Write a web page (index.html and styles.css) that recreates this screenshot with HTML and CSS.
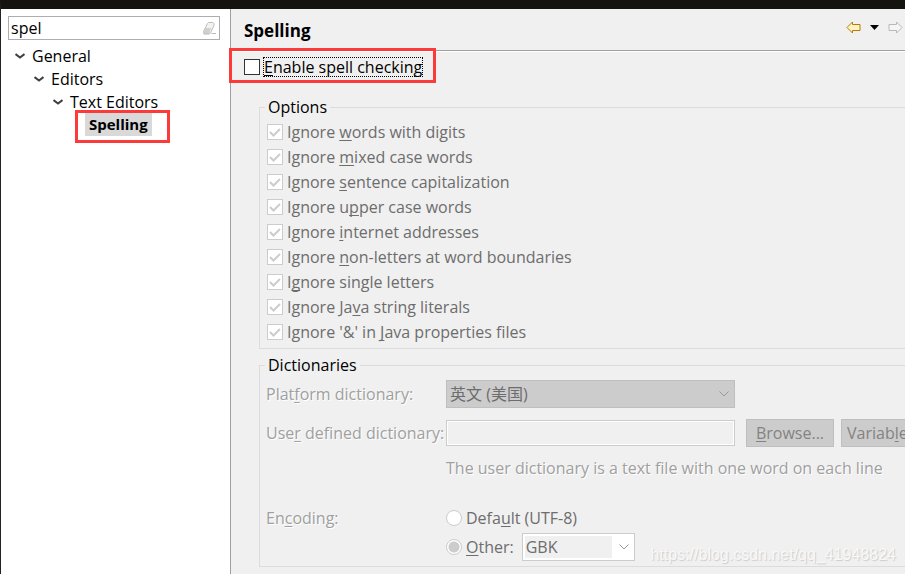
FILE: index.html
```
<!DOCTYPE html>
<html lang="en">
<head>
    <meta charset="UTF-8">
    <meta name="viewport" content="width=device-width, initial-scale=1.0">
    <title>Preferences</title>
    <link rel="stylesheet" href="styles.css">
</head>
<body>
    <div class="window">
        <aside class="sidebar">
            <div class="filter">
                <input class="filter-input" type="text" value="spel" aria-label="Filter text">
                <button class="icon-button" type="button" aria-label="Clear">
                    <svg width="14" height="13" viewBox="0 0 14 13">
                        <path d="M5.500.5H10l1 1v2L7.500 11l-1 1.500h-5l-1-1V9.500L4.500 1.500z" fill="#f2f2f0"/>
                        <path d="M2.500 6H8l-2 6H1V9.500z" fill="#d0d0ce"/>
                        <path d="M5.500.5H10l1 1v2L7.500 11l-1.500 1H1L.5 9.500 4.500 1.500zM8.500 11.500H13" fill="none" stroke="#bdbdbd"/>
                    </svg>
                </button>
            </div>
            <ul class="tree">
                <li>
                    <div class="node"><svg class="twisty" width="10" height="6" viewBox="0 0 10 6"><path d="M.5 1l4.500 3.500L9.500 1"/></svg>General</div>
                    <ul>
                        <li>
                            <div class="node"><svg class="twisty" width="10" height="6" viewBox="0 0 10 6"><path d="M.5 1l4.500 3.500L9.500 1"/></svg>Editors</div>
                            <ul>
                                <li>
                                    <div class="node"><svg class="twisty" width="10" height="6" viewBox="0 0 10 6"><path d="M.5 1l4.500 3.500L9.500 1"/></svg>Text Editors</div>
                                    <ul>
                                        <li><div class="node leaf"><span class="selected">Spelling</span></div></li>
                                    </ul>
                                </li>
                            </ul>
                        </li>
                    </ul>
                </li>
            </ul>
            <div class="mark mark-tree"></div>
        </aside>

        <main class="page">
            <header class="page-header">
                <h1>Spelling</h1>
                <div class="nav">
                    <button class="icon-button" type="button" aria-label="Back">
                        <svg width="15" height="13" viewBox="0 0 15 13"><path d="M1 6.500L6.500 1v2.500H14v6H6.500V12z" fill="#fff3c0" stroke="#b9770e"/></svg>
                    </button>
                    <button class="icon-button" type="button" aria-label="History">
                        <svg width="9" height="5" viewBox="0 0 9 5"><path d="M0 0h9L4.500 5z" fill="#000"/></svg>
                    </button>
                    <button class="icon-button" type="button" aria-label="Forward" disabled>
                        <svg width="15" height="13" viewBox="0 0 15 13"><path d="M14 6.500L8.500 1v2.500H1v6h7.500V12z" fill="#f5f5f3" stroke="#b8b8b8"/></svg>
                    </button>
                </div>
            </header>

            <div class="content">
                <label class="check enable"><input type="checkbox"><span class="focus"><u>E</u>nable spell checking</span></label>

                <fieldset class="group" disabled>
                    <legend>Options</legend>
                    <label class="check"><input type="checkbox" checked>Ignore <u>w</u>ords with digits</label>
                    <label class="check"><input type="checkbox" checked>Ignore <u>m</u>ixed case words</label>
                    <label class="check"><input type="checkbox" checked>Ignore <u>s</u>entence capitalization</label>
                    <label class="check"><input type="checkbox" checked>Ignore u<u>p</u>per case words</label>
                    <label class="check"><input type="checkbox" checked>Ignore <u>i</u>nternet addresses</label>
                    <label class="check"><input type="checkbox" checked>Ignore <u>n</u>on-letters at word boundaries</label>
                    <label class="check"><input type="checkbox" checked>I<u>g</u>nore single letters</label>
                    <label class="check"><input type="checkbox" checked>Ignore Ja<u>v</u>a string literals</label>
                    <label class="check"><input type="checkbox" checked>Ignore '&amp;' in <u>J</u>ava properties files</label>
                </fieldset>

                <fieldset class="group dictionaries" disabled>
                    <legend>Dictionaries</legend>
                    <div class="form">
                        <label class="caption" for="platform">Plat<u>f</u>orm dictionary:</label>
                        <select class="combo" id="platform"><option>英文 (美国)</option></select>

                        <label class="caption row-start" for="userDict">Use<u>r</u> defined dictionary:</label>
                        <input class="field" id="userDict" type="text">
                        <div class="buttons">
                            <button class="button" type="button"><u>B</u>rowse...</button>
                            <button class="button variables" type="button">Variab<u>l</u>es...</button>
                        </div>

                        <p class="caption hint">The user dictionary is a text file with one word on each line</p>
                    </div>
                    <div class="form encoding">
                        <span class="caption">En<u>c</u>oding:</span>
                        <label class="radio"><input type="radio" name="encoding">Defa<u>u</u>lt (UTF-8)</label>
                        <div class="other">
                            <label class="radio"><input type="radio" name="encoding" checked><span><u>O</u>ther:</span></label>
                            <select class="combo combo-small" aria-label="Other encoding"><option>GBK</option></select>
                        </div>
                    </div>
                </fieldset>
            </div>
            <div class="mark mark-enable"></div>
            <div class="watermark">https://blog.csdn.net/qq_41948824</div>
        </main>
    </div>
</body>
</html>
```
FILE: styles.css
```
* {
    box-sizing: border-box;
}

body {
    margin: 0;
    font-family: "Open Sans", "Noto Sans CJK SC", sans-serif;
    font-size: 16px;
    line-height: 20px;
    color: #000;
    background: #f0f0f0;
    overflow: hidden;
}

input, select, button {
    font: inherit;
    margin: 0;
}

u {
    text-decoration-thickness: 1px;
    text-underline-offset: 2px;
    text-decoration-skip-ink: none;
}

.window {
    display: flex;
    min-height: 100vh;
    border-top: 9px solid #141310;
    border-left: 1px solid #222;
}

/* Left side: filter and tree */
.sidebar {
    position: relative;
    flex: 0 0 230px;
    min-width: 0;
    padding: 7px 10px 0 7px;
    background: #fff;
    border-right: 1px solid #a0a0a0;
}

.filter {
    display: flex;
    align-items: center;
    height: 24px;
    padding: 0 2px;
    border: 1px solid #abadb3;
}

.filter-input {
    flex: 1;
    min-width: 0;
    padding: 0;
    border: 0;
    outline: 0;
    background: none;
}

.icon-button {
    display: flex;
    padding: 0;
    border: 0;
    background: none;
}

.tree,
.tree ul {
    margin: 0;
    padding: 0;
    list-style: none;
}

.tree {
    padding: 4px 0 0 7px;
}

.tree ul {
    padding-left: 19px;
}

.node {
    display: flex;
    align-items: center;
    gap: 7px;
    height: 23px;
}

.twisty {
    fill: none;
    stroke: #404040;
    stroke-width: 2;
}

.leaf {
    padding-left: 13px;
}

.selected {
    padding: 1px 4px 2px;
    font-size: 15px;
    font-weight: bold;
    background: #d9d9d9;
}

/* Right side: preference page */
.page {
    position: relative;
    flex: 1;
    min-width: 0;
}

.page-header {
    display: flex;
    align-items: center;
    justify-content: space-between;
    height: 43px;
    padding: 2px 2px 0 13px;
    border-bottom: 1px solid #fff;
    box-shadow: inset 0 -1px #a0a0a0;
}

h1 {
    margin: 0;
    font-size: 17px;
}

.nav {
    display: flex;
    align-items: center;
    gap: 9px;
    padding-bottom: 8px;
}

.content {
    padding: 5px 0 0 13px;
    overflow: hidden;
}

.check,
.radio {
    display: flex;
    align-items: center;
    height: 25px;
    white-space: pre;
}

.check input,
.radio input {
    appearance: none;
    flex: none;
    width: 16px;
    height: 16px;
    margin-right: 4px;
    border: 1px solid #333;
    background: #fff;
}

.check input:disabled,
.radio input:disabled {
    border-color: #ccc;
}

.check input:checked {
    background: url("data:image/svg+xml,%3Csvg xmlns='http://www.w3.org/2000/svg' viewBox='0 0 14 14'%3E%3Cpath d='M2 7l3.500 3.500L12 4' fill='none' stroke='%23ccc' stroke-width='2'/%3E%3C/svg%3E") #fff;
}

.enable {
    height: 20px;
}

.enable input {
    margin-right: 3px;
}

.focus {
    outline: 1px dotted #000;
    outline-offset: -1px;
    padding: 0 1px;
}

.group {
    min-width: 0;
    margin: 20px -20px 0 15px;
    padding: 2px 7px 4px;
    border: 1px solid #dcdcdc;
    color: #6d6d6d;
}

.group legend {
    margin-left: -2px;
    padding: 0 3px;
    color: #000;
}

.dictionaries {
    margin-top: 6px;
    padding: 5px 6px;
}

.dictionaries legend {
    margin-left: -1px;
}

.form {
    display: grid;
    grid-template-columns: 180px 289px 1fr;
    row-gap: 11px;
    align-items: center;
}

.caption {
    margin: 0;
    color: #a0a0a0;
    text-shadow: 1px 1px #fff;
    white-space: nowrap;
}

.row-start {
    grid-column: 1;
}

.combo {
    appearance: none;
    height: 28px;
    padding: 0 3px;
    border: 1px solid #bfbfbf;
    border-radius: 0;
    color: #6d6d6d;
    opacity: 1;
    background: url("data:image/svg+xml,%3Csvg xmlns='http://www.w3.org/2000/svg' width='10' height='6'%3E%3Cpath d='M.5.5L5 5 9.500.5' fill='none' stroke='%23999'/%3E%3C/svg%3E") no-repeat right 5px center #ccc;
}

.field {
    height: 26px;
    border: 1px solid #ccc;
    box-shadow: inset 0 0 0 1px #fff;
    background: #f0f0f0;
}

.buttons {
    display: flex;
    gap: 7px;
    padding-left: 11px;
}

.button {
    flex: none;
    width: 88px;
    height: 28px;
    padding: 0 5px;
    border: 1px solid #bfbfbf;
    color: #838383;
    background: #ccc;
    white-space: nowrap;
}

.variables {
    width: auto;
}

.hint {
    grid-column: 2 / 4;
}

.encoding {
    margin-top: 27px;
    row-gap: 3px;
}

.radio input {
    border-radius: 50%;
}

.radio input:checked {
    background: radial-gradient(circle, #ccc 5px, #fff 6px);
}

.other {
    grid-column: 2;
    display: flex;
    align-items: center;
    gap: 8px;
}

.combo-small {
    width: 113px;
    border-color: #ccc;
    background-color: #fff;
    background-image: url("data:image/svg+xml,%3Csvg xmlns='http://www.w3.org/2000/svg' width='10' height='6'%3E%3Cpath d='M.5.5L5 5 9.500.5' fill='none' stroke='%23999'/%3E%3C/svg%3E"), linear-gradient(#f0f0f0, #f0f0f0);
    background-position: right 5px center, 2px 2px;
    background-size: 10px 6px, 87px 22px;
}

/* Red callouts over the page */
.mark {
    position: absolute;
    border: 3px solid #fb3a3a;
    pointer-events: none;
}

.mark-tree {
    left: 74px;
    top: 101px;
    width: 95px;
    height: 33px;
}

.mark-enable {
    left: -2px;
    top: 39px;
    width: 207px;
    height: 35px;
}

.watermark {
    position: absolute;
    right: 9px;
    bottom: 9px;
    font-family: "Liberation Sans", Arial, sans-serif;
    font-size: 16px;
    color: #f8f8f8;
    text-shadow: 1px 1px 1px #ccc;
}
```
